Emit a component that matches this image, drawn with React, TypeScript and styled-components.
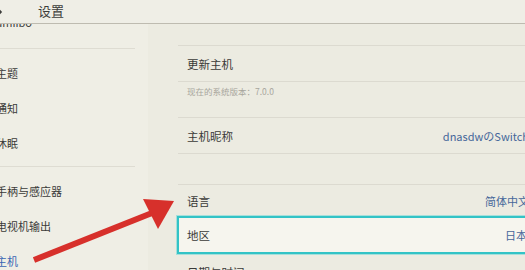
import React from "react";
import styled, { createGlobalStyle } from "styled-components";

const Global = createGlobalStyle`
  html, body { margin: 0; padding: 0; }
  body {
    width: 525px; height: 270px; overflow: hidden;
    background: #efeee5;
    font-family: "Noto Sans CJK SC", "Noto Sans", sans-serif;
  }
  #root { position: relative; width: 525px; height: 270px; overflow: hidden; }
`;

const Page = styled.div`
  width: 545px;
  height: 270px;
  display: flex;
  flex-direction: column;
`;

const Header = styled.header`
  position: relative;
  z-index: 2;
  box-sizing: border-box;
  height: 24px;
  flex: none;
  display: flex;
  align-items: center;
  background: #efeee6;
  border-bottom: 1px solid #bebbb0;
`;

const HeaderIcon = styled.svg`
  margin-left: -11px;
  margin-right: 35px;
  flex: none;
`;

const Title = styled.h1`
  margin: 0;
  font-size: 13px;
  font-weight: 400;
  color: #3d3d3b;
  line-height: 1;
  margin-top: -3px;
`;

const Main = styled.div`
  flex: 1;
  display: flex;
  min-height: 0;
`;

const Sidebar = styled.nav`
  width: 148px;
  flex: none;
  overflow: hidden;
  background: #efeee5;
`;

const SideList = styled.div`
  margin-top: -22px;
  padding-right: 13px;
  margin-left: -4px;
`;

const SideItem = styled.div<{ $active?: boolean; $h?: number }>`
  height: ${(p) => p.$h ?? 35}px;
  display: flex;
  align-items: center;
  font-size: 11px;
  color: ${(p) => (p.$active ? "#3a66b3" : "#3b3b39")};
`;

const SideDivider = styled.div`
  height: 1px;
  background: #dedcd2;
  margin: 6px 0;
`;

const Content = styled.section`
  flex: 1;
  background: #ecebe1;
  padding-left: 30px;
  padding-top: 21px;
  overflow: hidden;
`;

const Row = styled.div<{ $h?: number }>`
  box-sizing: border-box;
  height: ${(p) => p.$h ?? 36}px;
  display: flex;
  align-items: center;
  justify-content: space-between;
  padding: 0 16px 0 9px;
  border-top: 1px solid #dcdad0;
  font-size: 11.5px;
  color: #3a3a38;
`;

const LastRow = styled(Row)`
  border-top: none;
`;

const SubRow = styled.div`
  box-sizing: border-box;
  height: 36px;
  padding: 3px 0 0 9px;
  border-top: 1px solid #dcdad0;
  font-size: 8.5px;
  color: #a8a69d;
`;

const Gap = styled.div`
  height: 30px;
  border-top: 1px solid #dcdad0;
`;

const Value = styled.span`
  color: #46679a;
  font-size: 11px;
`;

const Selected = styled.div`
  box-sizing: border-box;
  height: 38px;
  margin-left: -1px;
  display: flex;
  align-items: center;
  justify-content: space-between;
  padding: 0 16px 0 8px;
  background: #f6f5ee;
  border: 2px solid #33c3c6;
  box-shadow: 0 0 0 1px rgba(110, 215, 215, 0.55);
  font-size: 11.5px;
  color: #3a3a38;
`;

const Arrow = styled.svg`
  position: absolute;
  left: 0;
  top: 0;
  z-index: 3;
  pointer-events: none;
`;

export default function App() {
  return (
    <>
      <Global />
      <Page>
        <Header>
          <HeaderIcon width="14" height="14" viewBox="0 0 14 14">
            <path d="M2 7h10M8 3l4 4-4 4" stroke="#3d3d3b" strokeWidth="1.6" fill="none" />
          </HeaderIcon>
          <Title>设置</Title>
        </Header>
        <Main>
          <Sidebar>
            <SideList>
              <SideItem $h={40}>amiibo</SideItem>
              <SideDivider />
              <SideItem>主题</SideItem>
              <SideItem>通知</SideItem>
              <SideItem>休眠</SideItem>
              <SideDivider />
              <SideItem>手柄与感应器</SideItem>
              <SideItem>电视机输出</SideItem>
              <SideItem $active>主机</SideItem>
            </SideList>
          </Sidebar>
          <Content>
            <Row>更新主机</Row>
            <SubRow>现在的系统版本：7.0.0</SubRow>
            <Row>
              主机昵称<Value>dnasdwのSwitch</Value>
            </Row>
            <Gap />
            <Row $h={32}>
              语言<Value>简体中文</Value>
            </Row>
            <Selected>
              地区<Value>日本</Value>
            </Selected>
            <LastRow>日期与时间</LastRow>
          </Content>
        </Main>
      </Page>
      <Arrow width="525" height="270" viewBox="0 0 525 270">
        <line x1="34" y1="260" x2="152" y2="213" stroke="#d7302b" strokeWidth="6" />
        <polygon points="174,201 143,199 158,229" fill="#d7302b" />
      </Arrow>
    </>
  );
}
